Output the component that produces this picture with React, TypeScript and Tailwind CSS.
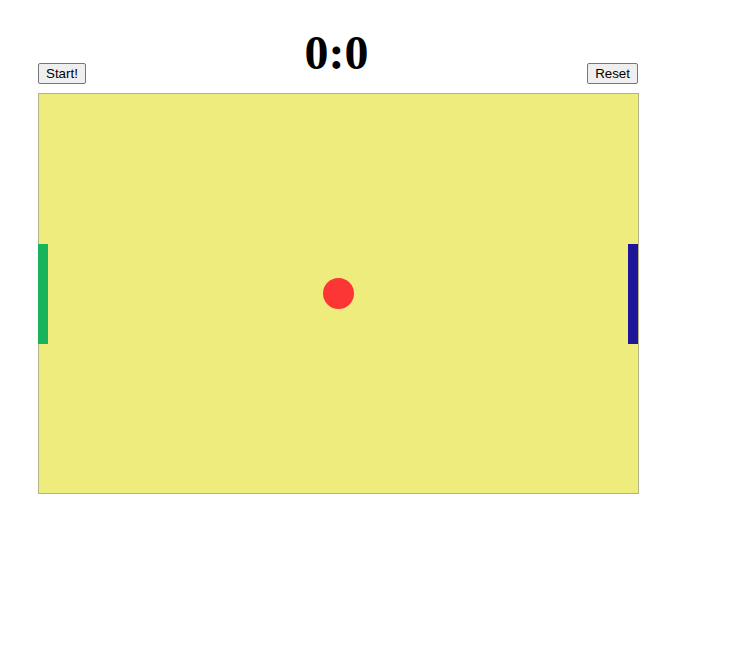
const btn =
  "bg-[#efefef] border border-[#767676] rounded-[2px] px-[7px] h-[21px] text-[13.33px] leading-none text-black font-['Liberation_Sans',Arial,sans-serif]"

export default function App() {
  return (
    <div className="w-[743px] h-[654px] bg-white pl-[38px] pt-[29px]">
      <div className="w-[600px] flex items-end justify-between">
        <button className={btn}>Start!</button>
        <h1 className="font-['Liberation_Serif','Times_New_Roman',serif] font-bold text-[48px] leading-[48px] mb-[7px] text-black">
          0:0
        </h1>
        <button className={btn}>Reset</button>
      </div>
      <div className="relative mt-[9px] w-[601px] h-[401px] bg-[#efec7e] border border-[#b5b38a]">
        {/* paddles sit over the border */}
        <div className="absolute left-[-1px] top-[150px] w-[10px] h-[100px] bg-[#19b35c]" />
        <div className="absolute right-0 top-[150px] w-[10px] h-[100px] bg-[#1f1599]" />
        <div className="absolute left-[284px] top-[184px] w-[31px] h-[31px] rounded-full bg-[#fc3535]" />
      </div>
    </div>
  )
}
